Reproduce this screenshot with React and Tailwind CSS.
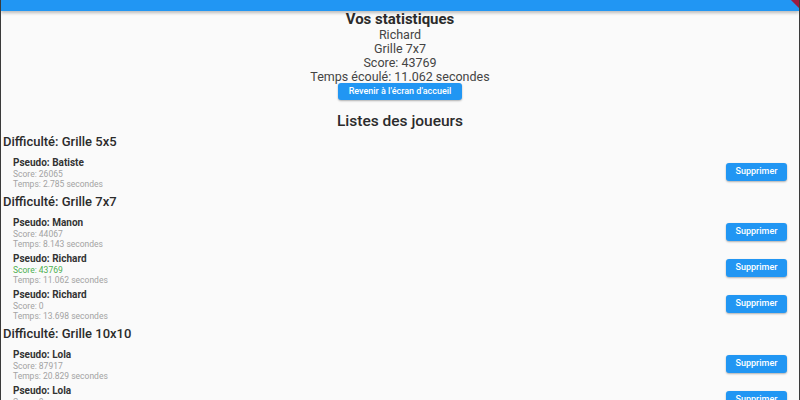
const groups = [
  {
    title: 'Difficulté: Grille 5x5',
    players: [{ name: 'Batiste', score: '26065', time: '2.785' }],
  },
  {
    title: 'Difficulté: Grille 7x7',
    players: [
      { name: 'Manon', score: '44067', time: '8.143' },
      { name: 'Richard', score: '43769', time: '11.062', current: true },
      { name: 'Richard', score: '0', time: '13.698' },
    ],
  },
  {
    title: 'Difficulté: Grille 10x10',
    players: [
      { name: 'Lola', score: '87917', time: '20.829' },
      { name: 'Lola', score: '0', time: '24.310' },
    ],
  },
]

function PlayerRow({ player }) {
  return (
    <div className="h-[36px] flex items-center justify-between pl-3 pr-[12px] shrink-0">
      <div className="flex flex-col whitespace-nowrap pt-[1px]">
        <span className="text-[10px] leading-[12px] font-bold text-[#333]">Pseudo: {player.name}</span>
        <span
          className={
            player.current
              ? 'text-[8.5px] leading-[10px] text-[#4caf50]'
              : 'text-[8.5px] leading-[10px] text-[#a3a3a3]'
          }
        >
          Score: {player.score}
        </span>
        <span className="text-[8.5px] leading-[10px] text-[#a3a3a3]">Temps: {player.time} secondes</span>
      </div>
      <button className="h-[18px] w-[61px] rounded-[3px] bg-[#2196f3] text-white text-[9px] font-medium whitespace-nowrap shadow-[0_1px_2px_rgba(0,0,0,0.3)]">
        Supprimer
      </button>
    </div>
  )
}

export default function App() {
  return (
    <div
      className="relative w-[800px] h-[400px] overflow-hidden bg-[#fafafa] border-x border-[#3a3a3a] flex flex-col"
      style={{ fontFamily: 'Roboto, sans-serif' }}
    >
      <div className="h-[11px] shrink-0 bg-[#2196f3] shadow-[0_2px_3px_rgba(0,0,0,0.25)] z-10" />
      <div className="absolute top-0 right-0 w-[16px] h-[8px] overflow-hidden z-20">
        <div className="absolute -right-[10px] top-[-14px] w-[40px] h-[10px] bg-[#9b1b3f] rotate-45" />
      </div>

      <div className="flex flex-col items-center text-[#2b2b2b] shrink-0 whitespace-nowrap">
        <h1 className="text-[15px] leading-[17px] font-bold">Vos statistiques</h1>
        <p className="text-[12.5px] leading-[14px] text-[#444]">Richard</p>
        <p className="text-[12.5px] leading-[14px] text-[#444]">Grille 7x7</p>
        <p className="text-[12.5px] leading-[14px] text-[#444]">Score: 43769</p>
        <p className="text-[12.5px] leading-[13px] text-[#444]">Temps écoulé: 11.062 secondes</p>
        <button className="h-[17px] w-[124px] rounded-[3px] bg-[#2196f3] text-white text-[9px] font-medium shadow-[0_1px_2px_rgba(0,0,0,0.3)]">
          Revenir à l'écran d'accueil
        </button>
        <h2 className="mt-[13px] text-[15.5px] leading-[17px] font-medium">Listes des joueurs</h2>
      </div>

      <div className="flex flex-col">
        {groups.map((g) => (
          <div key={g.title} className="flex flex-col">
            <h3 className="h-[24px] leading-[24px] pl-[2px] text-[13px] font-medium text-[#2b2b2b]">{g.title}</h3>
            {g.players.map((p, i) => (
              <PlayerRow key={i} player={p} />
            ))}
          </div>
        ))}
      </div>
    </div>
  )
}
